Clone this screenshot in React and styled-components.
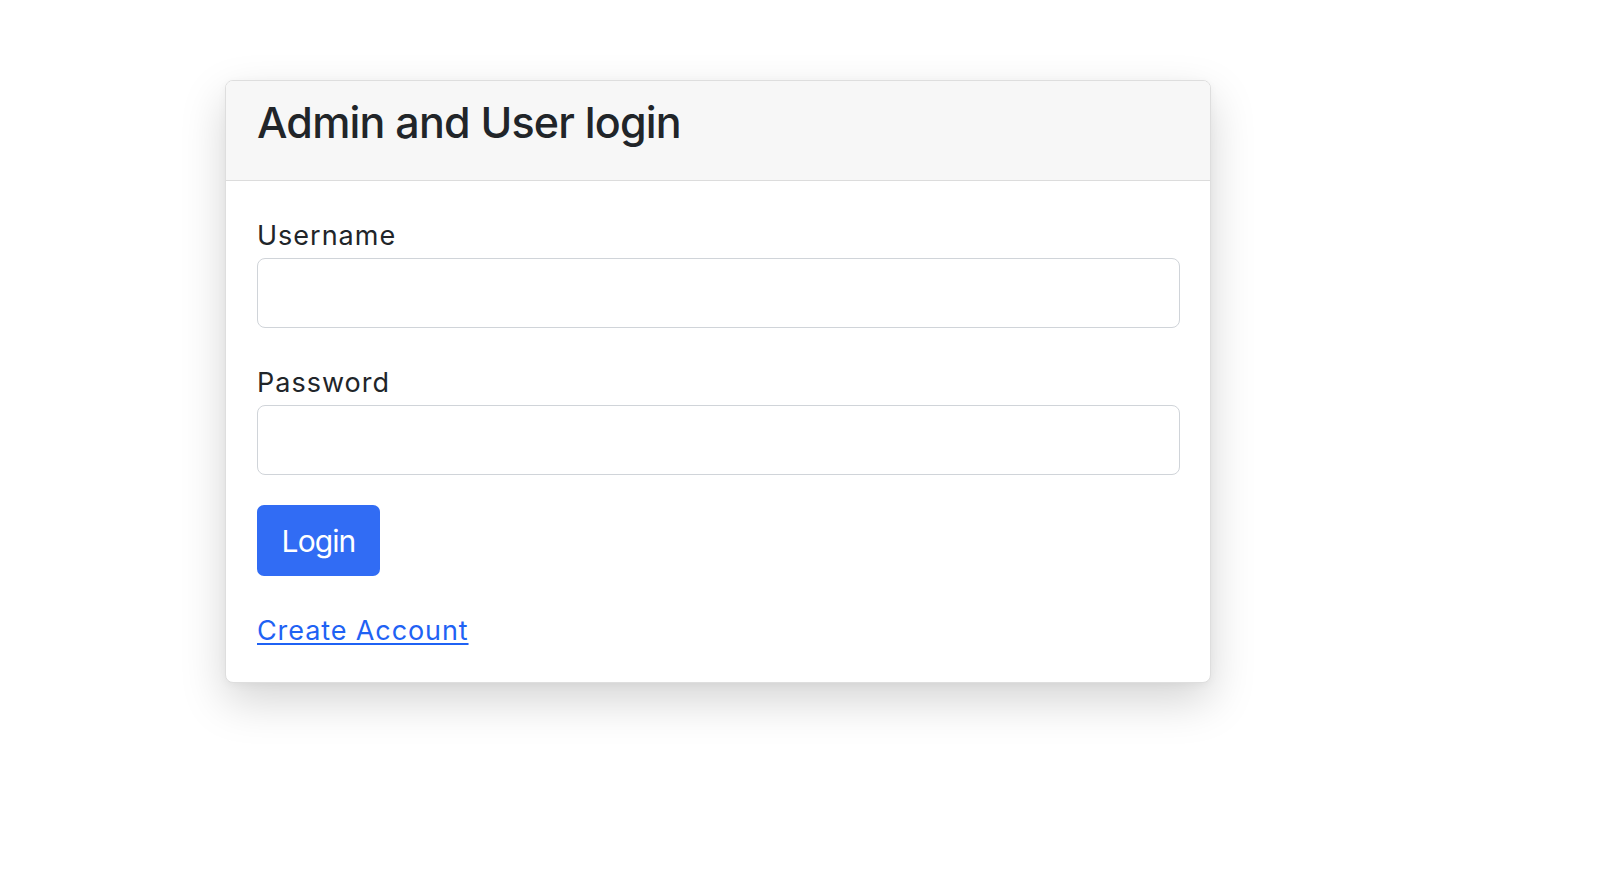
import React from "react";
import styled, { createGlobalStyle } from "styled-components";

const Global = createGlobalStyle`
  html, body { margin: 0; padding: 0; background: #ffffff; }
  body { font-family: Inter, "Helvetica Neue", Arial, sans-serif; color: #212529; }
  * { box-sizing: border-box; }
`;

const Page = styled.div`
  min-height: 877px;
  padding: 80px 0 0 225px;
`;

const Card = styled.div`
  width: 986px;
  background: #fff;
  border: 1px solid #dedede;
  border-radius: 8px;
  box-shadow: 0 18px 45px rgba(0, 0, 0, 0.17), 0 2px 8px rgba(0, 0, 0, 0.04);
  overflow: hidden;
`;

const CardHeader = styled.div`
  height: 100px;
  background: #f7f7f7;
  border-bottom: 1px solid #dcdcdc;
  padding: 15px 31px 0;
`;

const Title = styled.h3`
  margin: 0;
  font-size: 43px;
  line-height: 52px;
  font-weight: 500;
  letter-spacing: -0.8px;
  color: #212529;
`;

const CardBody = styled.form`
  padding: 35px 30px 31px 31px;
  display: flex;
  flex-direction: column;
`;

const Field = styled.div`
  display: flex;
  flex-direction: column;
  margin-bottom: ${(p) => p.$mb || 35}px;
`;

const Label = styled.label`
  font-size: 27px;
  line-height: 40px;
  letter-spacing: 1px;
  margin-bottom: 2px;
  color: #212529;
`;

const Input = styled.input`
  width: 100%;
  height: 70px;
  border: 1.5px solid #d0d4d9;
  border-radius: 8px;
  font-size: 26px;
  padding: 0 20px;
  outline: none;
  font-family: inherit;
  background: #fff;
`;

const Button = styled.button`
  align-self: flex-start;
  width: 123px;
  height: 71px;
  padding: 0;
  border: none;
  border-radius: 7px;
  background: #316cf4;
  color: #fff;
  font-family: inherit;
  font-size: 30px;
  letter-spacing: -0.9px;
  font-weight: 400;
  cursor: pointer;
  margin-bottom: 35px;
`;

const Link = styled.a`
  align-self: flex-start;
  font-size: 27px;
  line-height: 40px;
  letter-spacing: 0.9px;
  color: #1f62f4;
  text-decoration: underline;
  text-underline-offset: 3px;
  text-decoration-thickness: 2px;
`;

export default function App() {
  return (
    <>
      <Global />
      <Page>
        <Card>
          <CardHeader>
            <Title>Admin and User login</Title>
          </CardHeader>
          <CardBody onSubmit={(e) => e.preventDefault()}>
            <Field>
              <Label>Username</Label>
              <Input type="text" />
            </Field>
            <Field $mb={30}>
              <Label>Password</Label>
              <Input type="password" />
            </Field>
            <Button type="submit">Login</Button>
            <Link href="#">Create Account</Link>
          </CardBody>
        </Card>
      </Page>
    </>
  );
}
